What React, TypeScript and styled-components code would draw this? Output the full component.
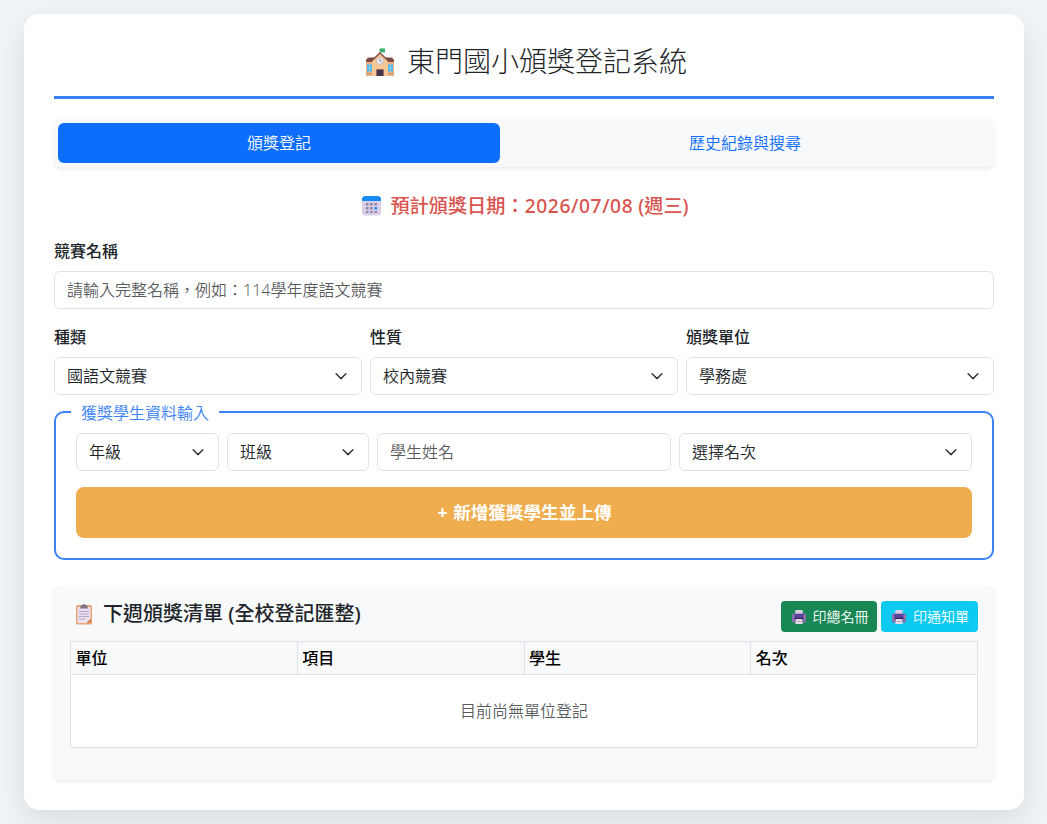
import React from "react";
import styled, { createGlobalStyle } from "styled-components";

const GlobalStyle = createGlobalStyle`
  *, *::before, *::after { box-sizing: border-box; }
  body {
    margin: 0;
    padding: 14px 23px 14px 24px;
    background: #f0f4f8;
    color: #212529;
    font: 350 16px/24px "Noto Sans", "Noto Sans CJK TC", sans-serif;
  }
`;

const Card = styled.main`
  width: 1000px;
  height: 796px;
  padding: 30px;
  background: #fff;
  border-radius: 15px;
  box-shadow: 0 10px 30px rgba(0, 0, 0, 0.1);
`;

const Title = styled.h1`
  display: flex;
  align-items: center;
  justify-content: center;
  gap: 12px;
  height: 55px;
  margin: 0 0 20px;
  padding: 0 0 17px 4px;
  border-bottom: 3px solid #3b82f6;
  font-size: 28px;
  font-weight: 300;
  line-height: 35px;
`;

const Tabs = styled.nav`
  display: flex;
  height: 48px;
  padding: 4px;
  background: #f8f9fa;
  border-radius: 6px;
  box-shadow: 0 2px 4px rgba(0, 0, 0, 0.075);
`;

const Tab = styled.button<{ $active?: boolean }>`
  flex: 1 1 auto;
  padding: 0 16px;
  border: 0;
  border-radius: 6px;
  background: ${(p) => (p.$active ? "#0d6efd" : "transparent")};
  color: ${(p) => (p.$active ? "#fff" : "#0d6efd")};
  font: inherit;
`;

const DateLine = styled.div`
  display: flex;
  align-items: center;
  justify-content: center;
  gap: 8px;
  margin: 24px 0 19px;
  height: 29px;
  padding-left: 2px;
  color: #d9534f;
  font-size: 19.2px;
  font-weight: 500;
  line-height: 29px;
`;

const DateValue = styled.span`
  letter-spacing: 0.6px;
`;

const Field = styled.div`
  min-width: 0;
`;

const Label = styled.label`
  display: block;
  height: 24px;
  margin-bottom: 8px;
  font-weight: 500;
`;

const Input = styled.input`
  display: block;
  width: 100%;
  min-width: 0;
  height: 38px;
  padding: 0 12px;
  border: 1px solid #dee2e6;
  border-radius: 6px;
  background: #fff;
  color: #212529;
  font: inherit;
  &::placeholder { color: rgba(33, 37, 41, 0.75); opacity: 1; }
`;

const SelectBox = styled.div`
  display: flex;
  align-items: center;
  justify-content: space-between;
  height: 38px;
  min-width: 0;
  padding: 0 12px;
  border: 1px solid #dee2e6;
  border-radius: 6px;
  background: #fff;
`;

const FieldRow = styled.div`
  display: grid;
  grid-template-columns: repeat(3, 1fr);
  gap: 8px;
  margin: 16px 0 5px;
`;

const Group = styled.fieldset`
  height: 160px;
  margin: 0 0 26px;
  padding: 9px 20px 20px;
  border: 2px solid #3b82f6;
  border-radius: 10px;
`;

const Legend = styled.legend`
  height: 24px;
  margin-left: -5px;
  padding: 0 10px;
  color: #3b82f6;
  line-height: 26px;
`;

const StudentRow = styled.div`
  display: grid;
  grid-template-columns: 143px 142px 294px 293px;
  gap: 8px;
`;

const AddButton = styled.button`
  display: block;
  width: 100%;
  height: 51px;
  margin-top: 16px;
  padding: 0 0 2px 1px;
  border: 0;
  border-radius: 8px;
  background: #f0ad4e;
  color: #fff;
  font: inherit;
  font-size: 17.6px;
  font-weight: 700;
  word-spacing: 1px;
`;

const Panel = styled.section`
  height: 194px;
  padding: 15px 16px;
  background: #f8f9fa;
  border-radius: 6px;
  box-shadow: 0 2px 4px rgba(0, 0, 0, 0.075);
`;

const PanelHead = styled.header`
  display: flex;
  justify-content: space-between;
  height: 40px;
`;

const PanelTitle = styled.h2`
  display: flex;
  align-items: center;
  gap: 9px;
  height: 26px;
  margin: 0;
  padding-left: 4px;
  font-size: 20px;
  font-weight: 500;
  line-height: 26px;
`;

const Actions = styled.div`
  display: flex;
  gap: 4px;
`;

const PrintButton = styled.button<{ $tone: string; $w: number }>`
  display: flex;
  align-items: center;
  justify-content: center;
  gap: 6px;
  width: ${(p) => p.$w}px;
  height: 31px;
  padding: 0 0 0 1px;
  border: 0;
  border-radius: 4px;
  background: ${(p) => p.$tone};
  color: #fff;
  font: inherit;
  font-size: 14px;
`;

const Table = styled.table`
  width: 908px;
  height: 107px;
  border-collapse: collapse;
  table-layout: fixed;
  background: #fff;
  th, td { border: 1px solid #dee2e6; }
  th {
    height: 33px;
    padding: 0 4.5px;
    background: #f8f9fa;
    color: #000;
    font-weight: 500;
    text-align: left;
  }
  td {
    padding: 0;
    color: rgba(33, 37, 41, 0.75);
    text-align: center;
  }
`;

const Chevron = () => (
  <svg width="16" height="12" viewBox="0 0 16 16" fill="none" stroke="#343a40" strokeWidth="2" strokeLinecap="round" strokeLinejoin="round">
    <path d="m1.5 5 6.5 6.5L14.5 5" />
  </svg>
);

const School = () => (
  <svg width="30" height="30" viewBox="0 0 30 30">
    <path d="M15 2v7" stroke="#8b98a5" />
    <path d="M15 1.5c2-1 3 .5 5 0v4c-2 .5-3-1-5 0z" fill="#35b36b" />
    <path d="M1 14h28v15H1z" fill="#e8b083" />
    <path d="M3 10.5h9L8 15H1v-2zM18 10.5h9l2 2.5v2h-7z" fill="#7d4c44" />
    <path d="m15 6 8 8v15H7V14z" fill="#f7c795" />
    <path d="m6.5 14 8.5-8 8.5 8" fill="none" stroke="#854b43" strokeWidth="1.4" />
    <circle cx="15" cy="14" r="3.4" fill="#eef0f7" stroke="#baa4ac" strokeWidth=".6" />
    <path d="M15 12v2l1.5 1.5" stroke="#63546b" fill="none" strokeWidth=".8" />
    <path d="M2 17.5h5v7H2zM23 17.5h5v7h-5z" fill="#4cb9ed" />
    <path d="M4.5 17.5v7M2 21h5M25.5 17.5v7M23 21h5" stroke="#a3d5e8" strokeWidth=".7" />
    <path d="M1 26.5h6M23 26.5h6" stroke="#c4936e" />
    <path d="M12 23h6v6h-6z" fill="#46364b" />
    <path d="M11.5 29v-6.5h7V29" fill="none" stroke="#9b6c62" />
  </svg>
);

const Calendar = () => (
  <svg width="21" height="21" viewBox="0 0 21 21">
    <rect x="1" y="1" width="19" height="19.5" rx="3.5" fill="#d9cde9" />
    <path d="M1 6V4.5A3.5 3.5 0 0 1 4.5 1h12A3.5 3.5 0 0 1 20 4.5V6z" fill="#168bf4" />
    <g fill="#9185a5">
      <path d="M5 8h2.5v2.5H5zM9.2 8h2.5v2.5H9.2zM13.5 8H16v2.5h-2.5zM5 12h2.5v2.5H5zM9.2 12h2.5v2.5H9.2zM5 16h2.5v2H5zM9.2 16h2.5v2H9.2zM13.5 16H16v2h-2.5z" />
    </g>
    <path d="M13.5 12H16v2.5h-2.5z" fill="#168bf4" />
  </svg>
);

const Clipboard = () => (
  <svg width="20" height="22" viewBox="0 0 20 22">
    <rect x="2" y="2" width="16" height="19.5" rx="1.5" fill="#e9a674" />
    <path d="M3.5 4h13v11.5L12.5 20h-9z" fill="#e9e1f2" />
    <path d="M12.5 20 17 15.5V20z" fill="#db8256" />
    <path d="M7 2h1.5a1.6 1.6 0 0 1 3 0H13l1 3.5H6z" fill="#827884" />
    <path d="M5 8.5h10M5 11h10M5 13.5h10M5 16h6" stroke="#b4a8bf" />
  </svg>
);

const Printer = () => (
  <svg width="16" height="16" viewBox="0 0 16 16">
    <path d="M4.5 1h7l.5 5H4z" fill="#d8cfe4" />
    <rect x="1" y="4.5" width="14" height="9" rx="1.5" fill="#8570ac" />
    <path d="M3.5 5h9v5h-9z" fill="#57449a" />
    <path d="M4 9.5h8" stroke="#31284f" strokeWidth="1.2" />
    <path d="M5 10h6l.7 5H4.3z" fill="#e5dcea" />
    <path d="M5.5 12.5h5" stroke="#b5a9c2" />
    <path d="M13 7.5h1.2" stroke="#ff6c93" />
  </svg>
);

const Select = ({ children }: { children: React.ReactNode }) => (
  <SelectBox role="combobox">
    <span>{children}</span>
    <Chevron />
  </SelectBox>
);

const categories = [
  ["種類", "國語文競賽"],
  ["性質", "校內競賽"],
  ["頒獎單位", "學務處"],
];

export default function App() {
  return (
    <>
      <GlobalStyle />
      <Card>
        <Title><School />東門國小頒獎登記系統</Title>
        <Tabs>
          <Tab $active>頒獎登記</Tab>
          <Tab>歷史紀錄與搜尋</Tab>
        </Tabs>
        <DateLine>
          <Calendar />
          <span>預計頒獎日期：<DateValue>2026/07/08</DateValue> (週三)</span>
        </DateLine>
        <Field>
          <Label>競賽名稱</Label>
          <Input placeholder="請輸入完整名稱，例如：114學年度語文競賽" />
        </Field>
        <FieldRow>
          {categories.map(([label, value]) => (
            <Field key={label}>
              <Label>{label}</Label>
              <Select>{value}</Select>
            </Field>
          ))}
        </FieldRow>
        <Group>
          <Legend>獲獎學生資料輸入</Legend>
          <StudentRow>
            <Select>年級</Select>
            <Select>班級</Select>
            <Input placeholder="學生姓名" />
            <Select>選擇名次</Select>
          </StudentRow>
          <AddButton>+ 新增獲獎學生並上傳</AddButton>
        </Group>
        <Panel>
          <PanelHead>
            <PanelTitle><Clipboard />下週頒獎清單 (全校登記匯整)</PanelTitle>
            <Actions>
              <PrintButton $tone="#198754" $w={96}><Printer />印總名冊</PrintButton>
              <PrintButton $tone="#0dcaf0" $w={97}><Printer />印通知單</PrintButton>
            </Actions>
          </PanelHead>
          <Table>
            <thead>
              <tr><th>單位</th><th>項目</th><th>學生</th><th>名次</th></tr>
            </thead>
            <tbody>
              <tr><td colSpan={4}>目前尚無單位登記</td></tr>
            </tbody>
          </Table>
        </Panel>
      </Card>
    </>
  );
}
